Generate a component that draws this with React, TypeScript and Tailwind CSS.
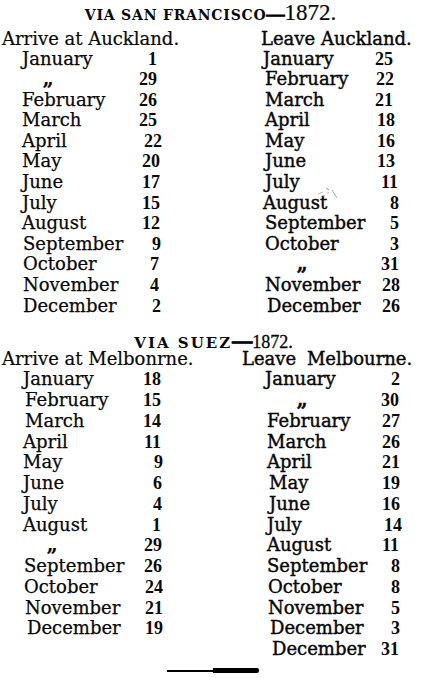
import React from "react";

type Row = [string, string, number, number];

const S1L: Row[] = [
  ["January", "1", 22, 157],
  [",,", "29", 43, 157],
  ["February", "26", 22, 157],
  ["March", "25", 22, 157],
  ["April", "22", 22, 162],
  ["May", "20", 22, 160],
  ["June", "17", 22, 160],
  ["July", "15", 22, 160],
  ["August", "12", 22, 160],
  ["September", "9", 23, 161],
  ["October", "7", 23, 159],
  ["November", "4", 23, 159],
  ["December", "2", 23, 161],
];

const S1R: Row[] = [
  ["January", "25", 263, 393],
  ["February", "22", 265, 394],
  ["March", "21", 265, 393],
  ["April", "18", 265, 395],
  ["May", "16", 265, 395],
  ["June", "13", 265, 395],
  ["July", "11", 265, 398],
  ["August", "8", 263, 399],
  ["September", "5", 265, 399],
  ["October", "3", 265, 399],
  [",,", "31", 297, 399],
  ["November", "28", 265, 400],
  ["December", "26", 267, 400],
];

const S2L: Row[] = [
  ["January", "18", 23, 161],
  ["February", "15", 25, 161],
  ["March", "14", 25, 161],
  ["April", "11", 23, 161],
  ["May", "9", 23, 163],
  ["June", "6", 23, 162],
  ["July", "4", 23, 162],
  ["August", "1", 23, 161],
  [",,", "29", 47, 162],
  ["September", "26", 24, 162],
  ["October", "24", 24, 163],
  ["November", "21", 25, 163],
  ["December", "19", 27, 163],
];

const S2R: Row[] = [
  ["January", "2", 265, 400],
  [",,", "30", 297, 399],
  ["February", "27", 267, 400],
  ["March", "26", 267, 400],
  ["April", "21", 267, 400],
  ["May", "19", 269, 400],
  ["June", "16", 269, 400],
  ["July", "14", 267, 402],
  ["August", "11", 267, 399],
  ["September", "8", 267, 400],
  ["October", "8", 268, 400],
  ["November", "5", 268, 400],
  ["December", "3", 270, 400],
  ["December", "31", 272, 399],
];

function Column({
  rows,
  start,
  end,
  tall,
  heavy,
}: {
  rows: Row[];
  start: number;
  end: number;
  tall: boolean;
  heavy: boolean;
}) {
  return (
    <div className="flex flex-col shrink-0" style={{ width: end - start }}>
      {rows.map(([m, d, x, r], i) => (
        <div
          key={i}
          className={
            "flex items-baseline justify-between " +
            (tall ? "h-[20.75px] leading-[20.75px]" : "h-[20.6px] leading-[20.6px]")
          }
          style={{ paddingLeft: x - start, paddingRight: end - r }}
        >
          <span
            className={
              (m === ",," ? "font-bold tracking-[-2px] " : "") +
              (heavy ? "[-webkit-text-stroke:0.4px_#000]" : "[-webkit-text-stroke:0.25px_#000]")
            }
          >
            {m}
          </span>
          <span className="font-['Liberation_Serif',serif] font-bold">{d}</span>
        </div>
      ))}
    </div>
  );
}

export default function App() {
  return (
    <div className="relative w-[421px] h-[678px] overflow-hidden bg-white text-[#0a0a0a] font-['DejaVu_Serif',serif] text-[18px]">
      {/* Title 1 */}
      <div className="h-[28.5px] pt-[3px] text-center font-['Liberation_Serif',serif] text-[23px] leading-[20.5px] whitespace-nowrap">
        <span className="font-['DejaVu_Serif',serif] font-bold text-[14px] leading-none tracking-[0.8px]">
          VIA SAN FRANCISCO
        </span>
        <span className="font-bold text-[18px] leading-none [-webkit-text-stroke:1px_#000]">—</span>
        <span className="[-webkit-text-stroke:0.2px_#000]">1872.</span>
      </div>

      {/* Header 1 */}
      <div className="flex h-[20px] leading-[20.6px] whitespace-nowrap">
        <div className="w-[210px] pl-[2px] [-webkit-text-stroke:0.2px_#000]">Arrive at Auckland.</div>
        <div className="pl-[51px] [-webkit-text-stroke:0.4px_#000]">Leave Auckland.</div>
      </div>

      <div className="flex">
        <Column rows={S1L} start={0} end={210} tall={false} heavy={false} />
        <Column rows={S1R} start={210} end={421} tall={false} heavy={true} />
      </div>

      {/* Title 2 */}
      <div className="h-[33.2px] pt-[14.6px] pl-[6px] text-center font-['Liberation_Serif',serif] text-[18px] leading-[18px] whitespace-nowrap">
        <span className="font-['DejaVu_Serif',serif] font-bold text-[15px] leading-none tracking-[2px]">VIA SUEZ</span>
        <span className="font-bold text-[20px] leading-none [-webkit-text-stroke:1px_#000]">—</span>
        <span className="[-webkit-text-stroke:0.3px_#000]">1872.</span>
      </div>

      {/* Header 2 */}
      <div className="flex h-[20px] leading-[20.6px] whitespace-nowrap">
        <div className="w-[210px] pl-[2px] [-webkit-text-stroke:0.2px_#000]">Arrive at Melbonrne.</div>
        <div className="pl-[32px] [-webkit-text-stroke:0.4px_#000] [word-spacing:5px]">Leave Melbourne.</div>
      </div>

      <div className="flex">
        <Column rows={S2L} start={0} end={210} tall={true} heavy={false} />
        <Column rows={S2R} start={210} end={421} tall={true} heavy={true} />
      </div>

      {/* Rule */}
      <div className="mt-[8px] flex h-[6px] items-center pl-[167px]">
        <div className="h-[2px] w-[46px] bg-black" />
        <div className="h-[5px] w-[46px] rounded-r-[2px] bg-black" />
      </div>

      {/* scan specks */}
      <svg className="absolute left-[316px] top-[184px]" width="24" height="24" viewBox="0 0 24 24">
        <path d="M2 10 L7 8" stroke="#bbb" strokeWidth="1" />
        <path d="M10 4 L13 6" stroke="#999" strokeWidth="1" />
        <path d="M16 6 L21 14" stroke="#aaa" strokeWidth="1" />
        <circle cx="8" cy="12" r="0.8" fill="#999" />
        <circle cx="12" cy="9" r="0.7" fill="#aaa" />
      </svg>
    </div>
  );
}
